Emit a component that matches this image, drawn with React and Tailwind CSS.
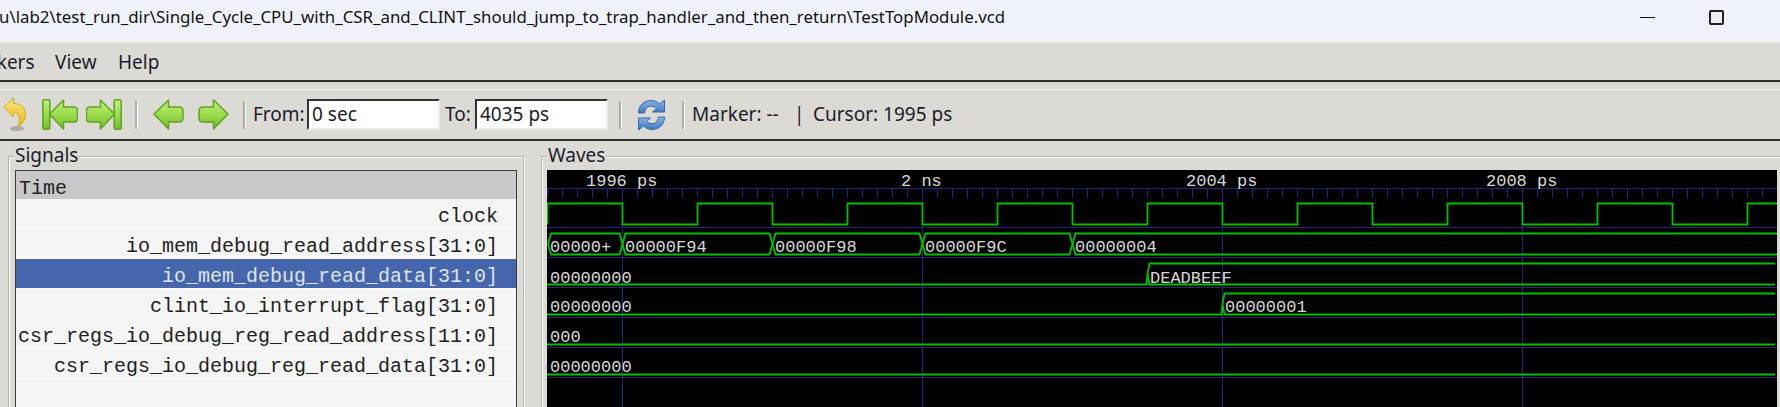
import React from "react";

const signals = [
  "clock",
  "io_mem_debug_read_address[31:0]",
  "io_mem_debug_read_data[31:0]",
  "clint_io_interrupt_flag[31:0]",
  "csr_regs_io_debug_reg_read_address[11:0]",
  "csr_regs_io_debug_reg_read_data[31:0]",
];

const SEL = 2;
const GREEN = "#00c000";
const BLUE = "#25257f";
const TXT = "#d8d8d8";

// wave coordinates are relative to the black canvas at (547, 170)
const W = 1230;
const H = 237;
const ox = 547;
const oy = 170;
const gridX = [622.5, 922.5, 1222.5, 1522.5];

function Ruler() {
  const ticks = [];
  for (let x = 547.5; x < 1776; x += 15) ticks.push(x);
  return (
    <g fill="none" stroke={BLUE} strokeWidth="1">
      <line x1="0" x2={W} y1="18.5" y2="18.5" />
      {ticks.map((x) => (
        <line key={x} x1={x - ox} x2={x - ox} y1="18.5" y2="28" />
      ))}
      {gridX.map((x) => (
        <line key={x} x1={x - ox} x2={x - ox} y1="18.5" y2={H} />
      ))}
      {[0, 1, 2, 3, 4, 5].map((i) => (
        <line key={i} x1="0" x2={W} y1={57.5 + i * 30} y2={57.5 + i * 30} />
      ))}
    </g>
  );
}

function Clock() {
  let d = `M0.5 54.5 V33.5`;
  let hi = true;
  for (let x = 622.5; x < 1776; x += 75) {
    d += ` H${x - ox} V${hi ? 54.5 : 33.5}`;
    hi = !hi;
  }
  d += ` H${W}`;
  return <path d={d} fill="none" stroke={GREEN} strokeWidth="1.8" />;
}

function Hex({ a, b, row }) {
  const top = 63.5 + row * 30;
  const bot = 84.5 + row * 30;
  const mid = (top + bot) / 2;
  return (
    <path
      d={`M${a - ox} ${mid} L${a - ox + 3} ${top} H${b - ox - 3} L${b - ox} ${mid} L${b - ox - 3} ${bot} H${a - ox + 3} Z`}
      fill="none"
      stroke={GREEN}
      strokeWidth="1.8"
    />
  );
}

function Rising({ t, row }) {
  const top = 63.5 + row * 30;
  const bot = 84.5 + row * 30;
  const mid = (top + bot) / 2;
  const x = t - ox;
  return (
    <path
      d={`M0 ${bot} H${x - 1} L${x} ${mid} L${x + 2} ${top} H${W - 2} M${x} ${mid} L${x + 2} ${bot} H${W - 2}`}
      fill="none"
      stroke={GREEN}
      strokeWidth="1.8"
    />
  );
}

function Low({ row }) {
  const bot = 84.5 + row * 30;
  return <line x1="0" x2={W - 2} y1={bot} y2={bot} stroke={GREEN} strokeWidth="1.8" />;
}

function Label({ x, y, children }) {
  return (
    <text x={x - ox} y={y - oy} fill={TXT} fontSize="17" fontFamily="'Liberation Mono', monospace">
      {children}
    </text>
  );
}

function Waves() {
  return (
    <svg width={W} height={H} className="block">
      <Ruler />
      <Clock />
      <Hex a={548} b={622.5} row={0} />
      <Hex a={622.5} b={772.5} row={0} />
      <Hex a={772.5} b={922.5} row={0} />
      <Hex a={922.5} b={1072.5} row={0} />
      <Hex a={1072.5} b={1800} row={0} />
      <Rising t={1147.5} row={1} />
      <Rising t={1222.5} row={2} />
      <Low row={3} />
      <Low row={4} />

      <Label x={586} y={186}>1996 ps</Label>
      <Label x={901} y={186}>2 ns</Label>
      <Label x={1186} y={186}>2004 ps</Label>
      <Label x={1486} y={186}>2008 ps</Label>

      <Label x={550} y={252}>00000+</Label>
      <Label x={625} y={252}>00000F94</Label>
      <Label x={775} y={252}>00000F98</Label>
      <Label x={925} y={252}>00000F9C</Label>
      <Label x={1075} y={252}>00000004</Label>
      <Label x={550} y={283}>00000000</Label>
      <Label x={1150} y={283}>DEADBEEF</Label>
      <Label x={550} y={312}>00000000</Label>
      <Label x={1225} y={312}>00000001</Label>
      <Label x={550} y={342}>000</Label>
      <Label x={550} y={372}>00000000</Label>
    </svg>
  );
}

function ArrowLeft() {
  return (
    <path
      d="M1 15 L15.5 1 V8 H26 Q30 8 30 12 V19 Q30 23 26 23 H15.5 V30 Z"
      fill="url(#greenFill)"
      stroke="#5fa31f"
      strokeWidth="1.5"
      strokeLinejoin="round"
    />
  );
}

function GreenDefs() {
  return (
    <svg width="0" height="0" className="absolute">
      <defs>
        <linearGradient id="greenFill" x1="0" y1="0" x2="0" y2="1">
          <stop offset="0" stopColor="#c4ef7c" />
          <stop offset="0.55" stopColor="#96d94b" />
          <stop offset="1" stopColor="#74bd2c" />
        </linearGradient>
        <linearGradient id="yellowFill" x1="0" y1="0" x2="0" y2="1">
          <stop offset="0" stopColor="#fbe78a" />
          <stop offset="1" stopColor="#e8b90f" />
        </linearGradient>
        <linearGradient id="blueFill" x1="0" y1="0" x2="0" y2="1">
          <stop offset="0" stopColor="#8db6e6" />
          <stop offset="1" stopColor="#3c76bd" />
        </linearGradient>
      </defs>
    </svg>
  );
}

function UndoIcon() {
  return (
    <svg width="24" height="36" viewBox="0 0 24 36" className="block">
      <ellipse cx="14" cy="31.5" rx="7" ry="2.5" fill="#9a9890" opacity="0.7" />
      <path
        d="M0.8 10 L10.5 1 V6.5 C18 6.5 22.5 11 22.5 17.5 C22.5 23 19.5 27.5 15 29 C17 25.5 17 21 15.5 18 C14.3 15.8 12.5 15 10.5 15 V20 Z"
        fill="url(#yellowFill)"
        stroke="#d6a90f"
        strokeWidth="1"
        strokeLinejoin="round"
      />
    </svg>
  );
}

function FirstIcon() {
  return (
    <svg width="36" height="31" viewBox="0 0 36 31" className="block">
      <rect x="0.8" y="0.8" width="7" height="29.4" rx="1.5" fill="url(#greenFill)" stroke="#5fa31f" strokeWidth="1.5" />
      <g transform="translate(6.5 0) scale(0.97 1)">
        <ArrowLeft />
      </g>
    </svg>
  );
}

function LastIcon() {
  return (
    <svg width="36" height="31" viewBox="0 0 36 31" className="block">
      <g transform="translate(36 0) scale(-1 1)">
        <rect x="0.8" y="0.8" width="7" height="29.4" rx="1.5" fill="url(#greenFill)" stroke="#5fa31f" strokeWidth="1.5" />
        <g transform="translate(6.5 0) scale(0.97 1)">
          <ArrowLeft />
        </g>
      </g>
    </svg>
  );
}

function BackIcon() {
  return (
    <svg width="31" height="31" viewBox="0 0 31 31" className="block">
      <ArrowLeft />
    </svg>
  );
}

function ForwardIcon() {
  return (
    <svg width="31" height="31" viewBox="0 0 31 31" className="block">
      <g transform="translate(31 0) scale(-1 1)">
        <ArrowLeft />
      </g>
    </svg>
  );
}

function RefreshIcon() {
  return (
    <svg width="29" height="32" viewBox="0 0 29 32" className="block">
      <g fill="url(#blueFill)" stroke="#346aad" strokeWidth="1" strokeLinejoin="round">
        <path d="M1.5 14 C1.5 6 7.5 1.5 14 1.5 C18 1.5 20.5 3 22.5 5 L27.5 1 V13 H15.5 L19.5 9.5 C18 8 16 7.3 14 7.3 C10.5 7.3 8 9.8 7.5 14 Z" />
        <path d="M27.5 18 C27.5 26 21.5 30.5 15 30.5 C11 30.5 8.5 29 6.5 27 L1.5 31 V19 H13.5 L9.5 22.5 C11 24 13 24.7 15 24.7 C18.5 24.7 21 22.2 21.5 18 Z" />
      </g>
    </svg>
  );
}

function Sep({ className }) {
  return <div className={`h-[28px] w-[3px] shrink-0 border-l-2 border-l-[#b0aea8] border-r border-r-white ${className}`} />;
}

function Field({ value, className }) {
  return (
    <div className={`flex h-[31px] shrink-0 items-center border-2 border-t-[#333] border-l-[#333] border-r-[#eeede9] border-b-[#eeede9] bg-white pl-[3px] text-[19px] text-[#1c1c24] ${className}`}>
      {value}
    </div>
  );
}

export default function App() {
  return (
    <div
      className="flex h-[407px] w-[1780px] flex-col overflow-hidden bg-[#dcdad5] text-[#1c1c2c]"
      style={{ fontFamily: "'Noto Sans', 'Open Sans', sans-serif" }}
    >
      <GreenDefs />
      {/* title bar */}
      <div className="flex h-[43px] shrink-0 items-center border-b-2 border-b-[#ececec] bg-[#eff2fb]">
        <div className="-ml-px mb-[7px] whitespace-nowrap text-[16.85px] text-[#111]">
          {"u\\lab2\\test_run_dir\\Single_Cycle_CPU_with_CSR_and_CLINT_should_jump_to_trap_handler_and_then_return\\TestTopModule.vcd"}
        </div>
        <div className="mb-[7px] ml-auto mr-[56px] flex items-center gap-[54px]">
          <div className="h-px w-[15px] bg-[#111]" />
          <div className="h-[15px] w-[15px] rounded-[2px] border-2 border-[#222] bg-[#eceef4]" />
        </div>
      </div>

      {/* menu bar */}
      <div className="flex h-[39px] shrink-0 items-center border-b-2 border-b-[#2c2c2c] pt-[2px] text-[19px]">
        <span className="-ml-[39px] w-[94px] shrink-0">Markers</span>
        <span className="w-[63px] shrink-0">View</span>
        <span>Help</span>
      </div>

      {/* toolbar */}
      <div className="mt-[7px] flex h-[52px] shrink-0 items-center border-b-2 border-b-[#2c2c2c] border-t border-t-[#f6f5f2] text-[19px]">
        <div className="ml-[3px]"><UndoIcon /></div>
        <div className="ml-[15px]"><FirstIcon /></div>
        <div className="ml-[8px]"><LastIcon /></div>
        <Sep className="ml-[13px]" />
        <div className="ml-[15px]"><BackIcon /></div>
        <div className="ml-[14px]"><ForwardIcon /></div>
        <Sep className="ml-[14px]" />
        <span className="ml-[7px] w-[54px] shrink-0">From:</span>
        <Field value="0 sec" className="w-[133px]" />
        <span className="ml-[5px] w-[30px] shrink-0">To:</span>
        <Field value="4035 ps" className="w-[133px]" />
        <Sep className="ml-[11px]" />
        <div className="ml-[15px]"><RefreshIcon /></div>
        <Sep className="ml-[16px]" />
        <span className="ml-[7px] w-[102px] shrink-0 whitespace-pre">{"Marker: --"}</span>
        <span className="w-[19px] shrink-0">|</span>
        <span>Cursor: 1995 ps</span>
      </div>

      {/* panes */}
      <div className="flex min-h-0 flex-1 pl-[8px] pt-[15px]">
        <div className="relative h-[300px] w-[516px] shrink-0 border border-[#b4b2ac] px-[6px] pt-[13px] shadow-[inset_1px_1px_0_#fff,1px_1px_0_#fff]">
          <span className="absolute -top-[13px] left-[5px] bg-[#dcdad5] px-px text-[19px] leading-[22px]">Signals</span>
          <div
            className="h-[300px] border border-[#3c3c3c] bg-[#f5f5f5] text-[20px] text-[#222]"
            style={{ fontFamily: "'Liberation Mono', monospace" }}
          >
            <div className="flex h-[28px] items-center bg-[#c8c8c8] pl-[3px] pt-[8px] leading-none">Time</div>
            {signals.map((s, i) => (
              <div
                key={s}
                className={`flex h-[30px] items-center justify-end border-b border-b-white pr-[18px] pt-[6px] leading-none ${
                  i === SEL ? "bg-[#4565ad] text-[#dfe4f0]" : ""
                }`}
              >
                {s}
              </div>
            ))}
          </div>
        </div>

        <div className="relative ml-[17px] h-[300px] w-[1260px] shrink-0 border border-[#b4b2ac] pl-[5px] pt-[13px] shadow-[inset_1px_1px_0_#fff]">
          <span className="absolute -top-[13px] left-[5px] bg-[#dcdad5] px-px text-[19px] leading-[22px]">Waves</span>
          <div className="h-[237px] w-[1230px] overflow-hidden bg-black">
            <Waves />
          </div>
        </div>
      </div>
    </div>
  );
}
